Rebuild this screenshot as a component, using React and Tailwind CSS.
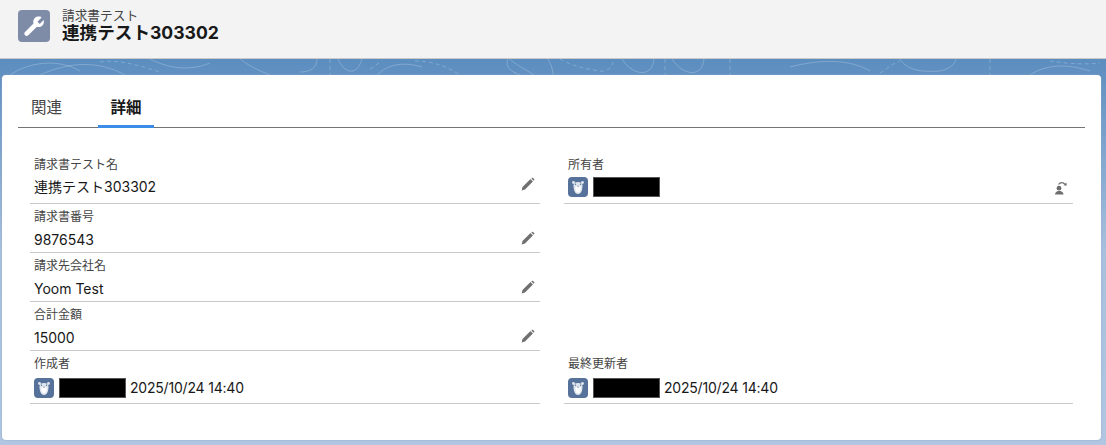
const font = { fontFamily: 'Inter, "Noto Sans CJK JP", sans-serif' };

function WrenchIcon() {
  return (
    <svg viewBox="0 0 32 32" className="w-8 h-8 rounded-[4px] bg-[#7f8ca8]">
      <path
        d="M23.6 7.6l-3.7 3.7c-.3.3-.3.7 0 1l1.300 1.300c.3.3.7.3 1 0l3.500-3.500c.5 1.900.1 4-1.300 5.400-1.500 1.500-3.600 1.900-5.500 1.300l-8.600 8.500c-.9.9-2.400.9-3.300 0s-.9-2.400 0-3.300l8.500-8.500c-.6-1.900-.2-4.100 1.300-5.600 1.500-1.400 3.600-1.800 5.500-1.300z"
        fill="white"
      />
    </svg>
  );
}

function Bear() {
  return (
    <svg viewBox="0 0 20 20" className="w-5 h-5 shrink-0 rounded-[4px] bg-[#56719a]">
      <circle cx="5.500" cy="5.500" r="1.400" fill="#dfe6ee" />
      <circle cx="14.500" cy="5.500" r="1.400" fill="#dfe6ee" />
      <path d="M5.500 8.500C5.500 6 7.500 5 10 5s4.500 1 4.500 3.500c0 5-1.800 8.500-4.500 8.500S5.500 13.500 5.500 8.500z" fill="#dfe6ee" />
      <path d="M7.300 11c0-1.500 1.200-2.500 2.700-2.500s2.700 1 2.700 2.500c0 2.500-1.200 4.500-2.700 4.500S7.300 13.500 7.300 11z" fill="#fff" />
      <circle cx="7.500" cy="7.300" r=".7" fill="#56719a" />
      <circle cx="12.500" cy="7.300" r=".7" fill="#56719a" />
      <path d="M8.900 8.800h2.200L10 10.100z" fill="#56719a" />
    </svg>
  );
}

function Pencil({ className = "mb-[4px]" }) {
  return (
    <svg viewBox="0 0 14 14" className={`w-[14px] h-[14px] shrink-0 ${className}`}>
      <path d="M.6 13.400l.9-3.400 8-7.900 2.400 2.400-7.900 8z" fill="#6f6f6f" />
      <path d="M10.400 1.400l.7-.6c.3-.2.6-.2.9.1l1.200 1.200c.2.300.2.600 0 .9l-.6.700z" fill="#6f6f6f" />
    </svg>
  );
}

function OwnerChange() {
  return (
    <svg viewBox="0 0 14 14" className="w-[14px] h-[14px] shrink-0 mt-[2px]">
      <circle cx="5" cy="7.200" r="2.400" fill="#6f6f6f" />
      <path d="M1 13.500c0-2 1.500-3 3-3.500h2.500c1.500.5 3 1.500 3 3.500z" fill="#6f6f6f" />
      <path d="M4.500 3.500C6 1 9.500 1 11 3.400" fill="none" stroke="#6f6f6f" strokeWidth="1.100" />
      <path d="M9.500 4.300l3.200.5-.3-3.300z" fill="#6f6f6f" />
    </svg>
  );
}

function Redacted() {
  return <span className="block w-[67px] h-5 shrink-0 bg-black border border-[#555]" />;
}

function Field({ label, value, h = "h-[49px]", pt = "pt-[4px]", gap = "mt-[4px]", children, icon }) {
  return (
    <div className={`${h} ${pt} px-1 border-b border-[#c9c9c9] flex flex-col`}>
      <div className="text-[12px] leading-[18px] text-[#444]">{label}</div>
      <div className={`flex items-center justify-between text-[14px] leading-5 text-[#181818] ${gap} pr-[1px]`}>
        {children || <span>{value}</span>}
        {icon}
      </div>
    </div>
  );
}

function UserValue({ date }) {
  return (
    <span className="flex items-center gap-[5px]">
      <Bear />
      <Redacted />
      {date && <span className="-ml-[1px] tracking-[-0.2px]">{date}</span>}
    </span>
  );
}

export default function App() {
  return (
    <div className="w-[1106px] h-[445px] overflow-hidden flex flex-col bg-[#f3f3f3]" style={font}>
      <header className="h-[59px] shrink-0 flex items-center gap-[12px] pl-[18px] pb-[7px] bg-[#f3f3f3] border-b border-[#c9c9c9]">
        <WrenchIcon />
        <div>
          <div className="text-[12.700px] leading-[14px] text-[#444]">請求書テスト</div>
          <div className="text-[17.600px] leading-[20px] font-bold text-[#181818]">連携テスト303302</div>
        </div>
      </header>

      <main className="relative flex-1 pt-[16px] pl-[2px] pr-[5px] pb-[5px] bg-gradient-to-b from-[#5b8dbf] via-[#a9c0de] to-[#b0c6e1]">
        <svg className="absolute left-0 top-0 w-full h-[16px]" viewBox="0 0 1106 16" fill="none" stroke="#ffffff" strokeOpacity="0.22">
          <path d="M10 16C30 2 60 0 80 12M40 16c30-14 60-14 85 0M150 0c20 10 40 12 60 4M240 0c10 8 25 14 30 16M300 13c10 0 17-4 17-13M338 0c5 12 18 20 24 0M377 16c10-10 25-14 45-8M510 0c6 6 15 10 24 16M508 0c-3 8 2 12 12 16M548 0c3 6 5 10 5 16M622 0c10 16 30 20 32 0M672 0c10 16 30 20 32 0M790 8c30-8 60-8 80 4M900 0c5 8 15 14 40 12 10-2 15-7 16-12M1030 16c15-10 35-12 60-4" />
          <path d="M100 3c20-3 40 4 60 10M330 0v16M370 10c5-3 8-6 12-8M415 2c15 0 30 4 45 14M560 0c10 6 25 10 40 12 8 1 12-4 13-9M665 0v16M730 0v16M990 0v16M880 14c8-5 12-9 20-12M1050 2c15 2 30 4 50 2" strokeDasharray="4 3" />
        </svg>
        <section className="relative h-[365px] px-4 rounded-[4px] bg-white shadow-[0_0_2px_#8ea6c6]">
          <nav className="flex h-[53px] items-end border-b border-[#747474] text-[15.500px]">
            <div className="w-[80px] h-[52px] flex items-center pl-[13px] text-[#444] pt-[14px]">関連</div>
            <div className="w-[56px] h-[52px] flex items-center justify-center font-bold text-[#181818] pt-[14px] -mb-[1px] border-b-[3px] border-[#3b8de8]">詳細</div>
          </nav>

          <div className="grid grid-cols-[510px_509px] gap-x-[24px] ml-[12px] mt-[23px]">
            <Field label="請求書テスト名" value="連携テスト303302" h="h-[53px]" pt="pt-[5px]" gap="mt-[3px]" icon={<Pencil className="mb-[6px]" />} />
            <Field label="所有者" h="h-[53px]" pt="pt-[5px]" gap="mt-[3px]" icon={<OwnerChange />}>
              <UserValue />
            </Field>
            <Field label="請求書番号" value="9876543" icon={<Pencil />} />
            <div />
            <Field label="請求先会社名" value="Yoom Test" icon={<Pencil />} />
            <div />
            <Field label="合計金額" value="15000" icon={<Pencil />} />
            <div />
            <Field label="作成者" h="h-[53px]" gap="mt-[5px]">
              <UserValue date="2025/10/24 14:40" />
            </Field>
            <Field label="最終更新者" h="h-[53px]" gap="mt-[5px]">
              <UserValue date="2025/10/24 14:40" />
            </Field>
          </div>
        </section>
      </main>
    </div>
  );
}
